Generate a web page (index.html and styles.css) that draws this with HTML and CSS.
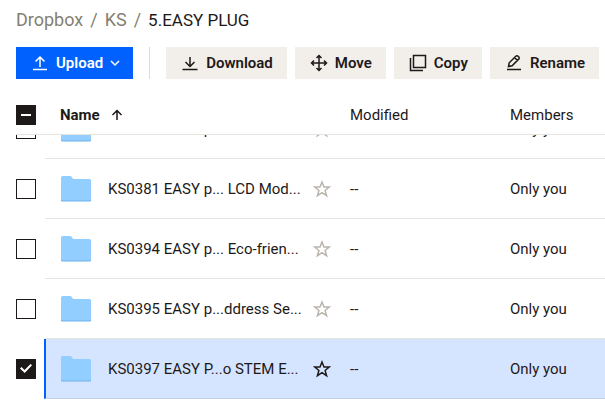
FILE: index.html
```html
<!DOCTYPE html>
<html lang="en">
<head>
<meta charset="utf-8">
<title>5.EASY PLUG - Dropbox</title>
<link rel="stylesheet" href="styles.css">
</head>
<body>
<svg class="defs" aria-hidden="true">
  <symbol id="folder" viewBox="0 0 30 26">
    <path d="M0 4h30v20a1 1 0 0 1-1 1.500H1a1 1 0 0 1-1-1.500z" fill="#71b1ec"/>
    <path d="M0 1.500A1.500 1.500 0 0 1 1.500 0h8c1.500 0 1.500 3 3.500 3h15.500A1.500 1.500 0 0 1 30 4.500v19a1 1 0 0 1-1 1H1a1 1 0 0 1-1-1z" fill="#92ceff"/>
  </symbol>
  <symbol id="star" viewBox="0 0 18 18">
    <path d="M9 2l2 5h5.200l-4.100 3.400 1.500 5.300L9 12.700l-4.600 3 1.500-5.300L1.800 7H7z" fill="none" stroke="currentColor" stroke-width="1.500"/>
  </symbol>
</svg>
<header class="top">
  <nav class="crumbs" aria-label="Breadcrumb">
    <a href="#">Dropbox</a><span>/</span><a href="#">KS</a><span>/</span><strong>5.EASY PLUG</strong>
  </nav>
  <div class="toolbar">
    <button class="btn primary" type="button">
      <svg class="icon" viewBox="0 0 24 24"><path d="M5 18.500h14M12 16V6.500M7.500 10.500L12 6l4.500 4.500"/></svg>
      Upload
      <svg class="chevron" viewBox="0 0 12 12"><path d="M2 4l4 4 4-4"/></svg>
    </button>
    <span class="divider"></span>
    <button class="btn" type="button">
      <svg class="icon" viewBox="0 0 24 24"><path d="M4.500 18.500h15M12 6v9.500M7.500 11l4.500 4.500 4.500-4.500"/></svg>
      Download
    </button>
    <button class="btn" type="button">
      <svg class="icon" viewBox="0 0 24 24"><path d="M4.500 12h15M12 4.500v15M9.500 7L12 4.500 14.500 7M9.500 17l2.500 2.500 2.500-2.500M7 9.500L4.500 12 7 14.500M17 9.500l2.500 2.500-2.500 2.500"/></svg>
      Move
    </button>
    <button class="btn" type="button">
      <svg class="icon" viewBox="0 0 24 24"><path d="M7.500 4.500h12v12h-12zM4.500 7v12.500H17"/></svg>
      Copy
    </button>
    <button class="btn" type="button">
      <svg class="icon" viewBox="0 0 24 24"><path d="M5 18.500h14M6.500 15.500l.7-3.700 6.600-6.600a1.600 1.600 0 0 1 2.300 0l.6.600a1.600 1.600 0 0 1 0 2.300l-6.600 6.600zM12.500 6.500l3 3"/></svg>
      Rename
    </button>
  </div>
</header>
<main class="list" id="list">
  <table>
    <colgroup><col class="c-check"><col class="c-name"><col class="c-mod"><col></colgroup>
    <thead>
      <tr>
        <th><input class="box mixed" type="checkbox" aria-label="Select all"></th>
        <th class="name"><div class="sort"><b>Name</b><svg viewBox="0 0 12 12"><path d="M6 11V2M1.500 6L6 1.500 10.500 6"/></svg></div></th>
        <th>Modified</th>
        <th>Members</th>
      </tr>
    </thead>
    <tbody>
      <tr>
        <td><input class="box" type="checkbox" aria-label="Select KS0380"></td>
        <td class="name"><div class="file"><svg class="folder"><use href="#folder"/></svg><a href="#">KS0380 EASY p... Module</a><button class="star" type="button" aria-label="Star"><svg><use href="#star"/></svg></button></div></td>
        <td>--</td><td>Only you</td>
      </tr>
      <tr>
        <td><input class="box" type="checkbox" aria-label="Select KS0381"></td>
        <td class="name"><div class="file"><svg class="folder"><use href="#folder"/></svg><a href="#">KS0381 EASY p... LCD Mod...</a><button class="star" type="button" aria-label="Star"><svg><use href="#star"/></svg></button></div></td>
        <td>--</td><td>Only you</td>
      </tr>
      <tr>
        <td><input class="box" type="checkbox" aria-label="Select KS0394"></td>
        <td class="name"><div class="file"><svg class="folder"><use href="#folder"/></svg><a href="#">KS0394 EASY p... Eco-frien...</a><button class="star" type="button" aria-label="Star"><svg><use href="#star"/></svg></button></div></td>
        <td>--</td><td>Only you</td>
      </tr>
      <tr>
        <td><input class="box" type="checkbox" aria-label="Select KS0395"></td>
        <td class="name"><div class="file"><svg class="folder"><use href="#folder"/></svg><a href="#">KS0395 EASY p...ddress Se...</a><button class="star" type="button" aria-label="Star"><svg><use href="#star"/></svg></button></div></td>
        <td>--</td><td>Only you</td>
      </tr>
      <tr class="selected">
        <td><input class="box" type="checkbox" checked aria-label="Select KS0397"></td>
        <td class="name"><div class="file"><svg class="folder"><use href="#folder"/></svg><a href="#">KS0397 EASY P...o STEM E...</a><button class="star" type="button" aria-label="Star"><svg><use href="#star"/></svg></button></div></td>
        <td>--</td><td>Only you</td>
      </tr>
    </tbody>
  </table>
</main>
<script src="script.js"></script>
</body>
</html>
```
FILE: styles.css
```css
* { box-sizing: border-box; }
body {
  margin: 0;
  height: 100vh;
  display: flex;
  flex-direction: column;
  overflow: hidden;
  background: #fff;
  color: #1e1919;
  font: 15px/20px Roboto, "Liberation Sans", sans-serif;
}
a { color: inherit; text-decoration: none; }
button { font: inherit; color: inherit; border: 0; padding: 0; background: none; }
svg { display: block; flex: none; }
.defs { position: absolute; width: 0; height: 0; }
.top { flex: none; padding: 8px 0 16px 16px; }
.crumbs {
  display: flex;
  align-items: baseline;
  gap: 7px;
  font-size: 18px;
  line-height: 24px;
  color: #857f73;
}
.crumbs strong { font-size: 17px; font-weight: 400; color: #1e1919; }
.toolbar { display: flex; gap: 8px; margin-top: 15px; }
.btn {
  display: flex;
  align-items: center;
  gap: 4px;
  height: 32px;
  padding: 0 14px 0 12px;
  background: #f2eeea;
  font-weight: 600;
  white-space: nowrap;
}
.btn svg, .sort svg { fill: none; stroke: currentColor; stroke-width: 1.5; }
.primary { padding-right: 12px; background: #0061fe; color: #fff; }
.icon { width: 24px; height: 24px; }
.chevron { width: 12px; height: 12px; margin-left: 2px; }
.divider { width: 1px; margin: 0 8px; background: #dcdad8; }
.list { flex: 1; min-height: 0; overflow: auto; padding: 0 0 16px 16px; scrollbar-width: none; }
table { width: 100%; table-layout: fixed; border-spacing: 0; }
.c-check { width: 28px; }
.c-name { width: 306px; }
.c-mod { width: 160px; }
th, td { padding: 0; text-align: left; font-weight: 400; white-space: nowrap; }
th {
  position: sticky;
  top: 0;
  z-index: 1;
  height: 40px;
  background: #fff;
  border-bottom: 1px solid #e6e4e1;
}
td { height: 60px; border-bottom: 1px solid #e6e4e1; }
td:first-child { border-bottom-color: transparent; }
td.name { border-left: 2px solid transparent; background-clip: padding-box; }
.name { padding-left: 16px; }
td.name { padding-left: 15px; }
.sort { display: flex; align-items: center; gap: 11px; }
.sort svg { width: 12px; height: 12px; }
.file { display: flex; align-items: center; }
.folder { width: 30px; height: 26px; }
.file a { width: 198px; margin-left: 17px; overflow: hidden; }
.star { margin-left: 7px; color: #bbb5ae; }
.star svg { width: 18px; height: 18px; }
.selected td:not(:first-child) { background: #d6e5ff; border-bottom-color: #c3cfe8; }
.selected td.name { border-left-color: #0061fe; }
.selected .star { color: #1e1919; }
.box {
  appearance: none;
  display: grid;
  place-items: center;
  width: 20px;
  height: 20px;
  margin: 0;
  border: 1px solid #1e1919;
  background: #fff;
}
.mixed, .box:checked { background: #1e1919; }
.mixed::before { content: ""; width: 10px; height: 2px; background: #fff; }
.box:checked::before {
  content: "";
  width: 12px;
  height: 10px;
  background: #fff;
  clip-path: polygon(0 50%, 12% 36%, 38% 66%, 88% 6%, 100% 18%, 39% 94%);
}
```
FILE: script.js
```js
document.getElementById("list").scrollTop = 36;
```
